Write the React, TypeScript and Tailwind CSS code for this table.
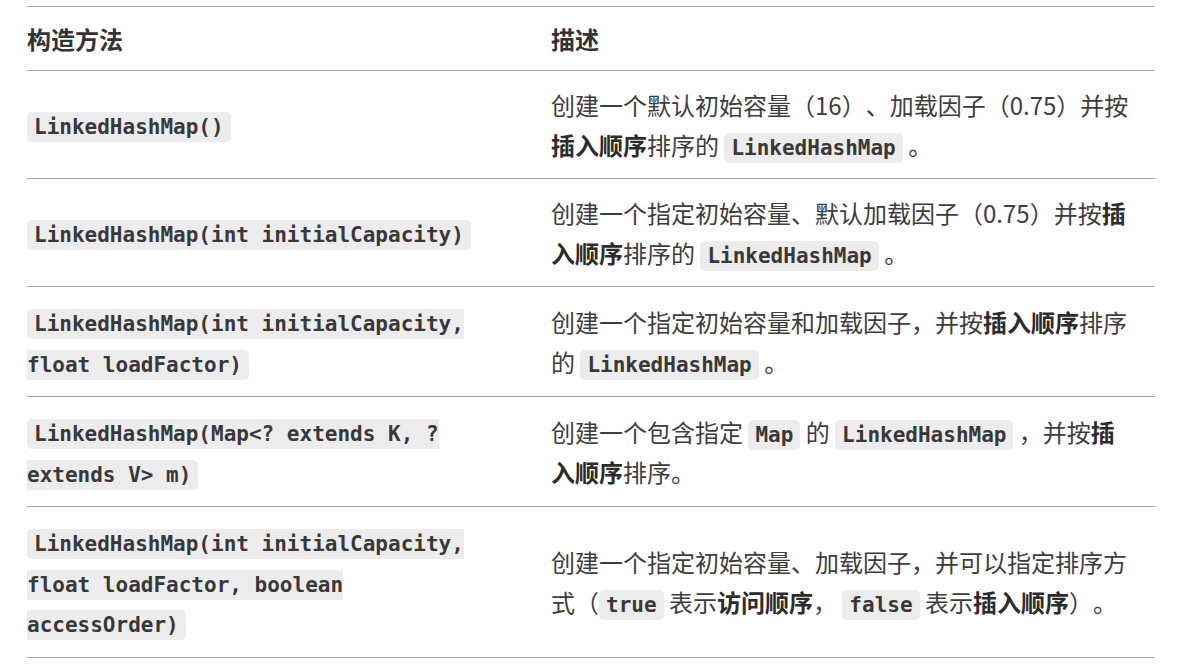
import React from "react";

const C = ({ children }: { children: React.ReactNode }) => (
  <code className="rounded-[5px] bg-[#ececec] px-[7px] py-[3px] font-['DejaVu_Sans_Mono','Liberation_Mono',monospace] text-[21px] leading-none font-bold text-[#383838]">
    {children}
  </code>
);

const B = ({ children }: { children: React.ReactNode }) => (
  <strong className="font-bold text-[#2c2c2c]">{children}</strong>
);

const rows: { left: React.ReactNode; right: React.ReactNode }[] = [
  {
    left: <C>LinkedHashMap()</C>,
    right: (
      <>
        创建一个默认初始容量（16）、加载因子（0.75）并按<B>插入顺序</B>排序的 <C>LinkedHashMap</C> 。
      </>
    ),
  },
  {
    left: <C>LinkedHashMap(int initialCapacity)</C>,
    right: (
      <>
        创建一个指定初始容量、默认加载因子（0.75）并按<B>插入顺序</B>排序的 <C>LinkedHashMap</C> 。
      </>
    ),
  },
  {
    left: <C>LinkedHashMap(int initialCapacity, float loadFactor)</C>,
    right: (
      <>
        创建一个指定初始容量和加载因子，并按<B>插入顺序</B>排序的 <C>LinkedHashMap</C> 。
      </>
    ),
  },
  {
    left: <C>{"LinkedHashMap(Map<? extends K, ? extends V> m)"}</C>,
    right: (
      <>
        创建一个包含指定 <C>Map</C> 的 <C>LinkedHashMap</C> ，并按<B>插入顺序</B>排序。
      </>
    ),
  },
  {
    left: <C>LinkedHashMap(int initialCapacity, float loadFactor, boolean accessOrder)</C>,
    right: (
      <>
        创建一个指定初始容量、加载因子，并可以指定排序方式（<C>true</C> 表示<B>访问顺序</B>， <C>false</C> 表示<B>插入顺序</B>）。
      </>
    ),
  },
];

export default function App() {
  return (
    <div className="min-h-[667px] w-[1177px] bg-white px-[27px] pt-[6px] font-['Noto_Sans_CJK_SC','Noto_Sans',sans-serif] text-[24px] text-[#3d3d3d] [text-spacing-trim:space-all]">
      <table className="w-[1128px] border-collapse">
        <thead>
          <tr className="border-y border-[#a6a6a6]">
            <th className="h-[64px] w-[524px] pr-[64px] text-left align-middle font-bold text-[#333]">构造方法</th>
            <th className="pr-[21px] text-left align-middle font-bold text-[#333]">描述</th>
          </tr>
        </thead>
        <tbody>
          {rows.map((r, i) => (
            <tr key={i} className="border-b border-[#a6a6a6]">
              <td className="py-[14px] pr-[64px] align-middle leading-[40.5px]">{r.left}</td>
              <td className="py-[14px] pr-[21px] align-middle leading-[39.5px]">{r.right}</td>
            </tr>
          ))}
        </tbody>
      </table>
    </div>
  );
}
